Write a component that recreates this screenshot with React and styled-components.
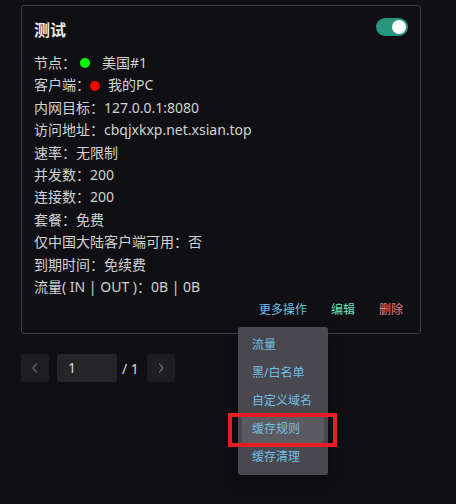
import React from "react";
import styled, { createGlobalStyle } from "styled-components";

const Global = createGlobalStyle`
  html, body { margin: 0; padding: 0; background: #101014; }
  body {
    font-family: "Noto Sans", "Noto Sans CJK SC", sans-serif;
    color: rgba(255,255,255,0.82);
    font-size: 14px;
  }
`;

const Page = styled.div`
  width: 456px;
  height: 504px;
  box-sizing: border-box;
  padding: 5px 35px 0 21px;
  background: #101014;
  position: relative;
  overflow: hidden;
`;

const Card = styled.div`
  width: 400px;
  box-sizing: border-box;
  border: 1px solid #3f3f44;
  border-radius: 3px;
  padding: 12px 12px 12px 12px;
`;

const Header = styled.div`
  display: flex;
  justify-content: space-between;
  align-items: flex-start;
`;

const Title = styled.div`
  font-size: 16px;
  font-weight: 700;
  line-height: 25px;
  color: rgba(255,255,255,0.92);
`;

const Switch = styled.div`
  width: 32px;
  height: 18px;
  border-radius: 9px;
  background: #2a957e;
  position: relative;
  &::after {
    content: "";
    position: absolute;
    top: 2px;
    right: 2px;
    width: 14px;
    height: 14px;
    border-radius: 50%;
    background: #fff;
  }
`;

const Rows = styled.div`
  margin-top: 9px;
`;

const Row = styled.div`
  display: flex;
  align-items: center;
  line-height: 22.4px;
  height: 22.4px;
  white-space: nowrap;
`;

const Dot = styled.span`
  display: inline-block;
  width: 10px;
  height: 10px;
  border-radius: 50%;
  background: ${(p) => p.$color};
  margin-left: ${(p) => p.$ml}px;
  margin-right: ${(p) => p.$mr}px;
`;

const Actions = styled.div`
  display: flex;
  justify-content: flex-end;
  gap: 14px;
  margin-top: 1px;
`;

const ActionWrap = styled.div`
  position: relative;
`;

const ActionButton = styled.span`
  display: block;
  padding: 0 5px;
  font-size: 12px;
  line-height: 22px;
  color: ${(p) => p.$color};
  cursor: pointer;
`;

const Menu = styled.div`
  position: absolute;
  left: 50%;
  transform: translateX(-50%);
  top: calc(100% + 6px);
  width: 90px;
  box-sizing: border-box;
  padding: 4px;
  background: #48484e;
  border-radius: 3px;
  box-shadow: 0 6px 16px rgba(0,0,0,0.35);
  z-index: 2;
`;

const MenuItem = styled.div`
  position: relative;
  height: 28px;
  line-height: 28px;
  padding-left: 10px;
  font-size: 12px;
  color: #72bfe4;
  border-radius: 3px;
  white-space: nowrap;
  background: ${(p) => (p.$active ? "#5a5a60" : "transparent")};
`;

const Highlight = styled.div`
  position: absolute;
  left: -14px;
  top: -2px;
  width: 109px;
  height: 34px;
  box-sizing: border-box;
  border: 4px solid #e61d25;
  pointer-events: none;
`;

const Pager = styled.div`
  display: flex;
  align-items: center;
  margin-top: 20px;
  gap: 8px;
`;

const PageBtn = styled.div`
  width: 28px;
  height: 28px;
  border-radius: 3px;
  background: #1e1e22;
  display: flex;
  align-items: center;
  justify-content: center;
`;

const PageInput = styled.div`
  width: 60px;
  height: 28px;
  box-sizing: border-box;
  border-radius: 3px;
  background: #252529;
  padding-left: 11px;
  line-height: 28px;
  font-size: 14px;
  color: rgba(255,255,255,0.85);
`;

const PageTotal = styled.span`
  font-size: 14px;
  margin: 0 0 0 -3px;
  color: rgba(255,255,255,0.85);
  white-space: pre;
`;

const Chevron = ({ dir }) => (
  <svg width="10" height="12" viewBox="0 0 10 12">
    <path
      d={dir === "left" ? "M6.5 2 L3 6 L6.5 10" : "M3.5 2 L7 6 L3.5 10"}
      fill="none"
      stroke="#66666b"
      strokeWidth="1.3"
      strokeLinecap="round"
      strokeLinejoin="round"
    />
  </svg>
);

export default function App() {
  const menu = ["流量", "黑/白名单", "自定义域名", "缓存规则", "缓存清理"];
  return (
    <Page>
      <Global />
      <Card>
        <Header>
          <Title>测试</Title>
          <Switch />
        </Header>
        <Rows>
          <Row>
            节点：<Dot $color="#00ff00" $ml={4} $mr={12} />美国#1
          </Row>
          <Row>
            客户端：<Dot $color="#ff0000" $ml={0} $mr={8} />我的PC
          </Row>
          <Row>内网目标：127.0.0.1:8080</Row>
          <Row>访问地址：cbqjxkxp.net.xsian.top</Row>
          <Row>速率：无限制</Row>
          <Row>并发数：200</Row>
          <Row>连接数：200</Row>
          <Row>套餐：免费</Row>
          <Row>仅中国大陆客户端可用：否</Row>
          <Row>到期时间：免续费</Row>
          <Row>流量( IN | OUT )：0B | 0B</Row>
        </Rows>
        <Actions>
          <ActionWrap>
            <ActionButton $color="#70c0e8">更多操作</ActionButton>
            <Menu>
              {menu.map((m) => (
                <MenuItem key={m} $active={m === "缓存规则"}>
                  {m}
                  {m === "缓存规则" && <Highlight />}
                </MenuItem>
              ))}
            </Menu>
          </ActionWrap>
          <ActionButton $color="#63e2b7">编辑</ActionButton>
          <ActionButton $color="#e88080">删除</ActionButton>
        </Actions>
      </Card>
      <Pager>
        <PageBtn>
          <Chevron dir="left" />
        </PageBtn>
        <PageInput>1</PageInput>
        <PageTotal>/ 1</PageTotal>
        <PageBtn>
          <Chevron dir="right" />
        </PageBtn>
      </Pager>
    </Page>
  );
}
